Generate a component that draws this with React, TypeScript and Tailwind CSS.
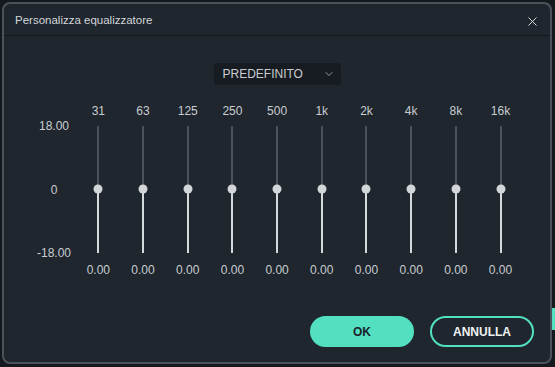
import { ChevronDown, X } from "lucide-react";

const bands = ["31", "63", "125", "250", "500", "1k", "2k", "4k", "8k", "16k"];

function Band({ label }: { label: string }) {
  return (
    <div className="flex w-[44.7px] flex-col items-center">
      <span className="h-4 text-[12px] leading-4 text-[#c9cdd1]">{label}</span>
      <div className="relative mt-[7px] flex h-[127px] w-[2px] flex-col">
        <div className="h-[63px] bg-[#4b525a]" />
        <div className="flex-1 bg-[#d6d9dc]" />
        <div className="absolute left-1/2 top-[63px] h-[9px] w-[9px] -translate-x-1/2 -translate-y-1/2 rounded-full bg-[#d3d6d9]" />
      </div>
      <span className="mt-[9px] h-4 text-[12px] leading-4 text-[#c9cdd1]">0.00</span>
    </div>
  );
}

export default function App() {
  return (
    <div
      className="flex h-[367px] w-[555px] bg-[#14191e] pl-[2px] pt-[2px]"
      style={{ fontFamily: "'Liberation Sans', Arial, sans-serif" }}
    >
      <div className="flex h-[362px] w-[550px] flex-col rounded-lg border-2 border-[#4c525a] bg-[#1f262e]">
        <div className="flex h-[32px] items-center justify-between border-b border-[#12171c] pl-[11px] pr-[10px] pt-[3px]">
          <span className="text-[11.5px] text-[#d2d6da]">Personalizza equalizzatore</span>
          <X className="h-[15px] w-[15px] stroke-[1.5] text-[#e4e7ea]" />
        </div>

        <div className="mt-[27px] flex justify-center">
          <div className="flex h-[22px] w-[127px] items-center justify-between rounded-[3px] bg-[#171c22] pl-[9px] pr-[6px]">
            <span className="text-[12px] text-[#c8ccd0]">PREDEFINITO</span>
            <ChevronDown className="h-3 w-3 stroke-[1.5] text-[#b8bcc0]" />
          </div>
        </div>

        <div className="mt-[18px] flex pl-[30px]">
          <div className="mt-[15px] flex h-[143px] w-[40px] flex-col items-center justify-between text-[12px] leading-4 text-[#c9cdd1]">
            <span>18.00</span>
            <span>0</span>
            <span>-18.00</span>
          </div>
          <div className="ml-[2px] flex">
            {bands.map((b) => (
              <Band key={b} label={b} />
            ))}
          </div>
        </div>

        <div className="mt-auto mb-[15px] flex justify-end gap-4 pr-[16px]">
          <button
            type="button"
            className="h-[31px] w-[104px] rounded-full bg-[#52e0c1] text-[12px] font-bold text-[#1b2229]"
          >
            OK
          </button>
          <button
            type="button"
            className="h-[31px] w-[104px] rounded-full border-2 border-[#52e0c1] text-[12px] font-bold text-[#eef1f3]"
          >
            ANNULLA
          </button>
        </div>
      </div>
      <div className="mt-[306px] h-[22px] w-[3px] bg-[#52e0c1]" />
    </div>
  );
}
